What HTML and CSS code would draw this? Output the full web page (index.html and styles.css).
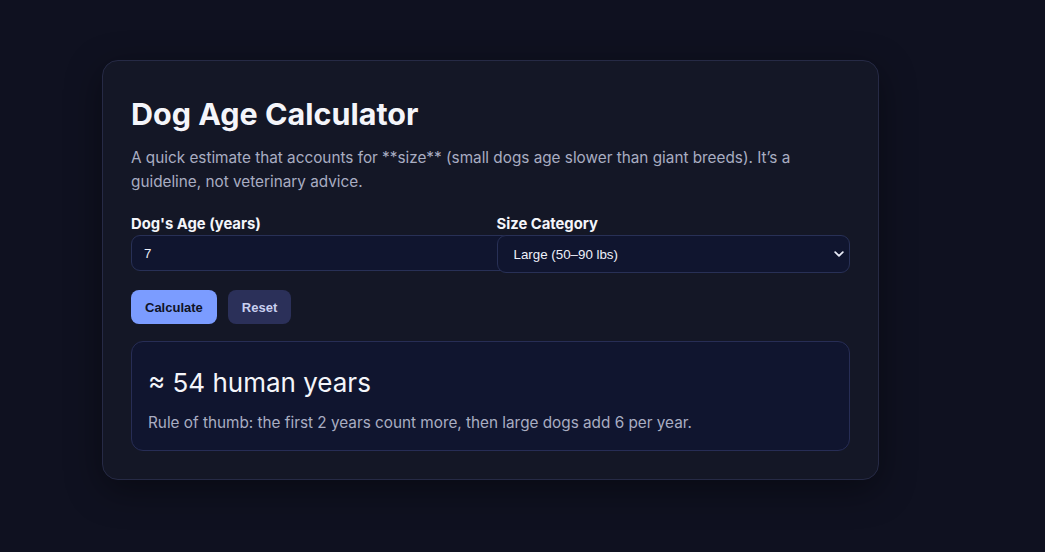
FILE: index.html
```html
<!DOCTYPE html>
<html lang="en">
<head>
<meta charset="utf-8">
<title>Dog Age Calculator</title>
<link rel="stylesheet" href="styles.css">
</head>
<body>
<main class="card">
  <h1 class="title">Dog Age Calculator</h1>
  <p class="intro">A quick estimate that accounts for **size** (small dogs age slower than giant breeds). It’s a guideline, not veterinary advice.</p>
  <div class="fields">
    <div class="field">
      <label class="label" for="age">Dog's Age (years)</label>
      <input class="input" id="age" type="text" value="7">
    </div>
    <div class="field">
      <label class="label" for="size">Size Category</label>
      <select class="select" id="size">
        <option>Small (under 20 lbs)</option>
        <option>Medium (20–50 lbs)</option>
        <option selected>Large (50–90 lbs)</option>
        <option>Giant (over 90 lbs)</option>
      </select>
    </div>
  </div>
  <div class="actions">
    <button class="btn btn-primary" type="button">Calculate</button>
    <button class="btn btn-secondary" type="button">Reset</button>
  </div>
  <section class="result">
    <div class="result-value">≈ 54 human years</div>
    <div class="result-note">Rule of thumb: the first 2 years count more, then large dogs add 6 per year.</div>
  </section>
</main>
</body>
</html>
```
FILE: styles.css
```css
html {
  min-height: 100%;
  background: #0f1120;
}
body {
  margin: 0;
  padding: 60px 0 60px 102px;
  font-family: Inter, "Noto Sans", sans-serif;
  color: #f1f2f8;
}
.card {
  width: 719px;
  padding: 28px;
  background: #141726;
  border: 1px solid #262a45;
  border-radius: 16px;
  box-shadow: 0 10px 36px rgba(0, 0, 0, 0.4);
}
.title {
  margin: 7px 0 14px;
  font-size: 30.5px;
  line-height: 36px;
  font-weight: 700;
  color: #f4f5fa;
}
.intro {
  margin: 0 0 21px;
  font-size: 15.3px;
  line-height: 24px;
  color: #a9adc2;
}
.fields {
  display: grid;
  grid-template-columns: 1fr 1fr;
  column-gap: 12px;
}
.field {
  display: flex;
  flex-direction: column;
  align-items: flex-start;
  gap: 2px;
}
.label {
  font-size: 14.8px;
  line-height: 18px;
  font-weight: 700;
  color: #f4f5fa;
}
.input, .select {
  font-family: "Liberation Sans", Arial, sans-serif;
  font-size: 13.33px;
  color: #eef0fa;
  background-color: #10152f;
  border: 1px solid #283056;
  border-radius: 9px;
  outline: none;
}
.input {
  box-sizing: content-box;
  width: 100%;
  height: 18px;
  padding: 8px 12px;
}
.select {
  box-sizing: border-box;
  width: 100%;
  height: 38px;
  padding: 0 12px 0 16px;
  appearance: none;
  background-image: url("data:image/svg+xml,%3Csvg xmlns='http://www.w3.org/2000/svg' width='10' height='6' viewBox='0 0 10 6'%3E%3Cpath d='M1.2 1.2l3.8 3.6 3.8-3.6' fill='none' stroke='%23e8eaf6' stroke-width='1.8' stroke-linecap='round' stroke-linejoin='round'/%3E%3C/svg%3E");
  background-repeat: no-repeat;
  background-position: right 5px center;
}
.actions {
  display: flex;
  gap: 11px;
  margin-top: 17px;
}
.btn {
  height: 34px;
  padding: 0 14px;
  border: none;
  border-radius: 8px;
  font-family: "Liberation Sans", Arial, sans-serif;
  font-size: 13px;
  font-weight: 700;
}
.btn-primary {
  background: #7b9cff;
  color: #0f1326;
}
.btn-secondary {
  background: #2b3059;
  color: #c9cff0;
}
.result {
  margin-top: 17px;
  padding: 25px 16px 17px;
  background: #10152f;
  border: 1px solid #272d55;
  border-radius: 12px;
}
.result-value {
  font-size: 26px;
  line-height: 32px;
  color: #f4f5fa;
}
.result-note {
  margin-top: 14px;
  font-size: 15.3px;
  line-height: 20px;
  color: #a9adc2;
}
```
